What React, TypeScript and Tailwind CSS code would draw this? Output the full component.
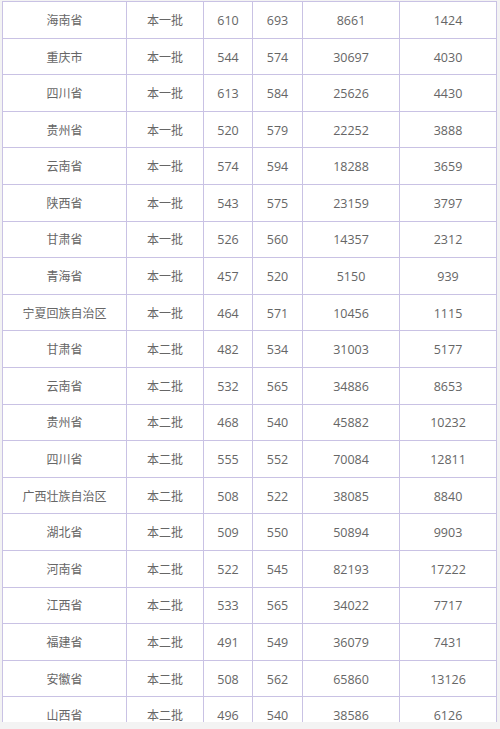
const rows: [string, string, number, number, number, number][] = [
  ["海南省", "本一批", 610, 693, 8661, 1424],
  ["重庆市", "本一批", 544, 574, 30697, 4030],
  ["四川省", "本一批", 613, 584, 25626, 4430],
  ["贵州省", "本一批", 520, 579, 22252, 3888],
  ["云南省", "本一批", 574, 594, 18288, 3659],
  ["陕西省", "本一批", 543, 575, 23159, 3797],
  ["甘肃省", "本一批", 526, 560, 14357, 2312],
  ["青海省", "本一批", 457, 520, 5150, 939],
  ["宁夏回族自治区", "本一批", 464, 571, 10456, 1115],
  ["甘肃省", "本二批", 482, 534, 31003, 5177],
  ["云南省", "本二批", 532, 565, 34886, 8653],
  ["贵州省", "本二批", 468, 540, 45882, 10232],
  ["四川省", "本二批", 555, 552, 70084, 12811],
  ["广西壮族自治区", "本二批", 508, 522, 38085, 8840],
  ["湖北省", "本二批", 509, 550, 50894, 9903],
  ["河南省", "本二批", 522, 545, 82193, 17222],
  ["江西省", "本二批", 533, 565, 34022, 7717],
  ["福建省", "本二批", 491, 549, 36079, 7431],
  ["安徽省", "本二批", 508, 562, 65860, 13126],
  ["山西省", "本二批", 496, 540, 38586, 6126],
];

const cell = "border border-[#c9c2e4] text-center align-middle p-0 pt-[3px]";

export default function App() {
  return (
    <div className="w-[500px] h-[729px] bg-[#f3f3f3] overflow-hidden">
      <div className="h-[722px] overflow-hidden pl-[2px] pt-[1px]">
        <table className="table-fixed border-collapse bg-white w-[494px] text-[12.5px] text-[#666666] font-['Open_Sans','Noto_Sans_CJK_SC',sans-serif]">
          <colgroup>
            <col className="w-[124px]" />
            <col className="w-[77px]" />
            <col className="w-[49px]" />
            <col className="w-[50px]" />
            <col className="w-[97px]" />
            <col className="w-[97px]" />
          </colgroup>
          <tbody>
            {rows.map((r, i) => (
              <tr key={i} className="h-[36.6px]">
                {r.map((v, j) => (
                  <td key={j} className={cell}>
                    {typeof v === "string" ? <span className="text-[12px]">{v}</span> : v}
                  </td>
                ))}
              </tr>
            ))}
          </tbody>
        </table>
      </div>
    </div>
  );
}
